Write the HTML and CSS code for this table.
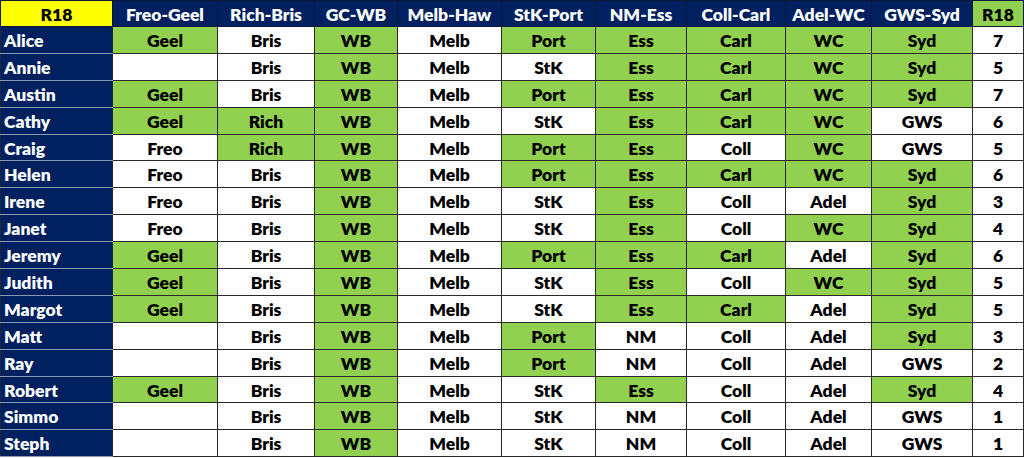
FILE: index.html
```html
<!DOCTYPE html>
<html lang="en">
<head>
<meta charset="utf-8">
<title>R18 Tipping</title>
<link rel="stylesheet" href="styles.css">
</head>
<body>
<table class="tips">
  <colgroup>
    <col class="c-name"><col class="c1"><col class="c2"><col class="c3"><col class="c4"><col class="c5"><col class="c6"><col class="c7"><col class="c8"><col class="c9"><col class="c-score">
  </colgroup>
  <thead>
    <tr>
      <th class="round">R18</th>
      <th>Freo-Geel</th><th>Rich-Bris</th><th>GC-WB</th><th>Melb-Haw</th><th>StK-Port</th><th>NM-Ess</th><th>Coll-Carl</th><th>Adel-WC</th><th>GWS-Syd</th>
      <th class="total">R18</th>
    </tr>
  </thead>
  <tbody id="rows">
    <tr><th class="name">Alice</th><td class="win">Geel</td><td>Bris</td><td class="win">WB</td><td>Melb</td><td class="win">Port</td><td class="win">Ess</td><td class="win">Carl</td><td class="win">WC</td><td class="win">Syd</td><td class="score">7</td></tr>
    <tr><th class="name">Annie</th><td></td><td>Bris</td><td class="win">WB</td><td>Melb</td><td>StK</td><td class="win">Ess</td><td class="win">Carl</td><td class="win">WC</td><td class="win">Syd</td><td class="score">5</td></tr>
    <tr><th class="name">Austin</th><td class="win">Geel</td><td>Bris</td><td class="win">WB</td><td>Melb</td><td class="win">Port</td><td class="win">Ess</td><td class="win">Carl</td><td class="win">WC</td><td class="win">Syd</td><td class="score">7</td></tr>
    <tr><th class="name">Cathy</th><td class="win">Geel</td><td class="win">Rich</td><td class="win">WB</td><td>Melb</td><td>StK</td><td class="win">Ess</td><td class="win">Carl</td><td class="win">WC</td><td>GWS</td><td class="score">6</td></tr>
    <tr><th class="name">Craig</th><td>Freo</td><td class="win">Rich</td><td class="win">WB</td><td>Melb</td><td class="win">Port</td><td class="win">Ess</td><td>Coll</td><td class="win">WC</td><td>GWS</td><td class="score">5</td></tr>
    <tr><th class="name">Helen</th><td>Freo</td><td>Bris</td><td class="win">WB</td><td>Melb</td><td class="win">Port</td><td class="win">Ess</td><td class="win">Carl</td><td class="win">WC</td><td class="win">Syd</td><td class="score">6</td></tr>
    <tr><th class="name">Irene</th><td>Freo</td><td>Bris</td><td class="win">WB</td><td>Melb</td><td>StK</td><td class="win">Ess</td><td>Coll</td><td>Adel</td><td class="win">Syd</td><td class="score">3</td></tr>
    <tr><th class="name">Janet</th><td>Freo</td><td>Bris</td><td class="win">WB</td><td>Melb</td><td>StK</td><td class="win">Ess</td><td>Coll</td><td class="win">WC</td><td class="win">Syd</td><td class="score">4</td></tr>
    <tr><th class="name">Jeremy</th><td class="win">Geel</td><td>Bris</td><td class="win">WB</td><td>Melb</td><td class="win">Port</td><td class="win">Ess</td><td class="win">Carl</td><td>Adel</td><td class="win">Syd</td><td class="score">6</td></tr>
    <tr><th class="name">Judith</th><td class="win">Geel</td><td>Bris</td><td class="win">WB</td><td>Melb</td><td>StK</td><td class="win">Ess</td><td>Coll</td><td class="win">WC</td><td class="win">Syd</td><td class="score">5</td></tr>
    <tr><th class="name">Margot</th><td class="win">Geel</td><td>Bris</td><td class="win">WB</td><td>Melb</td><td>StK</td><td class="win">Ess</td><td class="win">Carl</td><td>Adel</td><td class="win">Syd</td><td class="score">5</td></tr>
    <tr><th class="name">Matt</th><td></td><td>Bris</td><td class="win">WB</td><td>Melb</td><td class="win">Port</td><td>NM</td><td>Coll</td><td>Adel</td><td class="win">Syd</td><td class="score">3</td></tr>
    <tr><th class="name">Ray</th><td></td><td>Bris</td><td class="win">WB</td><td>Melb</td><td class="win">Port</td><td>NM</td><td>Coll</td><td>Adel</td><td>GWS</td><td class="score">2</td></tr>
    <tr><th class="name">Robert</th><td class="win">Geel</td><td>Bris</td><td class="win">WB</td><td>Melb</td><td>StK</td><td class="win">Ess</td><td>Coll</td><td>Adel</td><td class="win">Syd</td><td class="score">4</td></tr>
    <tr><th class="name">Simmo</th><td></td><td>Bris</td><td class="win">WB</td><td>Melb</td><td>StK</td><td>NM</td><td>Coll</td><td>Adel</td><td>GWS</td><td class="score">1</td></tr>
    <tr><th class="name">Steph</th><td></td><td>Bris</td><td class="win">WB</td><td>Melb</td><td>StK</td><td>NM</td><td>Coll</td><td>Adel</td><td>GWS</td><td class="score">1</td></tr>
  </tbody>
</table>
</body>
</html>
```
FILE: styles.css
```css
html, body {
  margin: 0;
  padding: 0;
  background: #ffffff;
}

.tips {
  border-collapse: collapse;
  table-layout: fixed;
  width: 1023px;
  font-family: Lato, "Liberation Sans", sans-serif;
  font-weight: 800;
  font-size: 17.5px;
  color: #000000;
}

.c-name { width: 112px; }
.c1 { width: 105px; }
.c2 { width: 97px; }
.c3 { width: 83px; }
.c4 { width: 104px; }
.c5 { width: 94px; }
.c6 { width: 91px; }
.c7 { width: 99px; }
.c8 { width: 86px; }
.c9 { width: 101px; }
.c-score { width: 51px; }

.tips th,
.tips td {
  border: 1px solid #2a2a2a;
  padding: 2px 0 0 0;
  text-align: center;
  white-space: nowrap;
  overflow: hidden;
  line-height: 22px;
}

.tips thead tr { height: 26px; }
.tips tbody tr { height: 26.9px; }

.tips thead th {
  background: #002060;
  color: #ffffff;
  font-weight: 800;
  border-color: #0d1a3a;
}

.tips thead th.round {
  background: #ffff00;
  color: #000000;
}

.tips thead th.total {
  background: #92d050;
  color: #000000;
}

.tips th.name {
  background: #002060;
  color: #ffffff;
  text-align: left;
  padding-left: 3px;
  font-weight: 800;
  border-top-color: #8a98b4;
  border-bottom-color: #8a98b4;
  border-left-color: #1a2540;
  border-right-color: #1a2540;
}

.tips td {
  background: #ffffff;
}

.tips td.win {
  background: #92d050;
}
```
